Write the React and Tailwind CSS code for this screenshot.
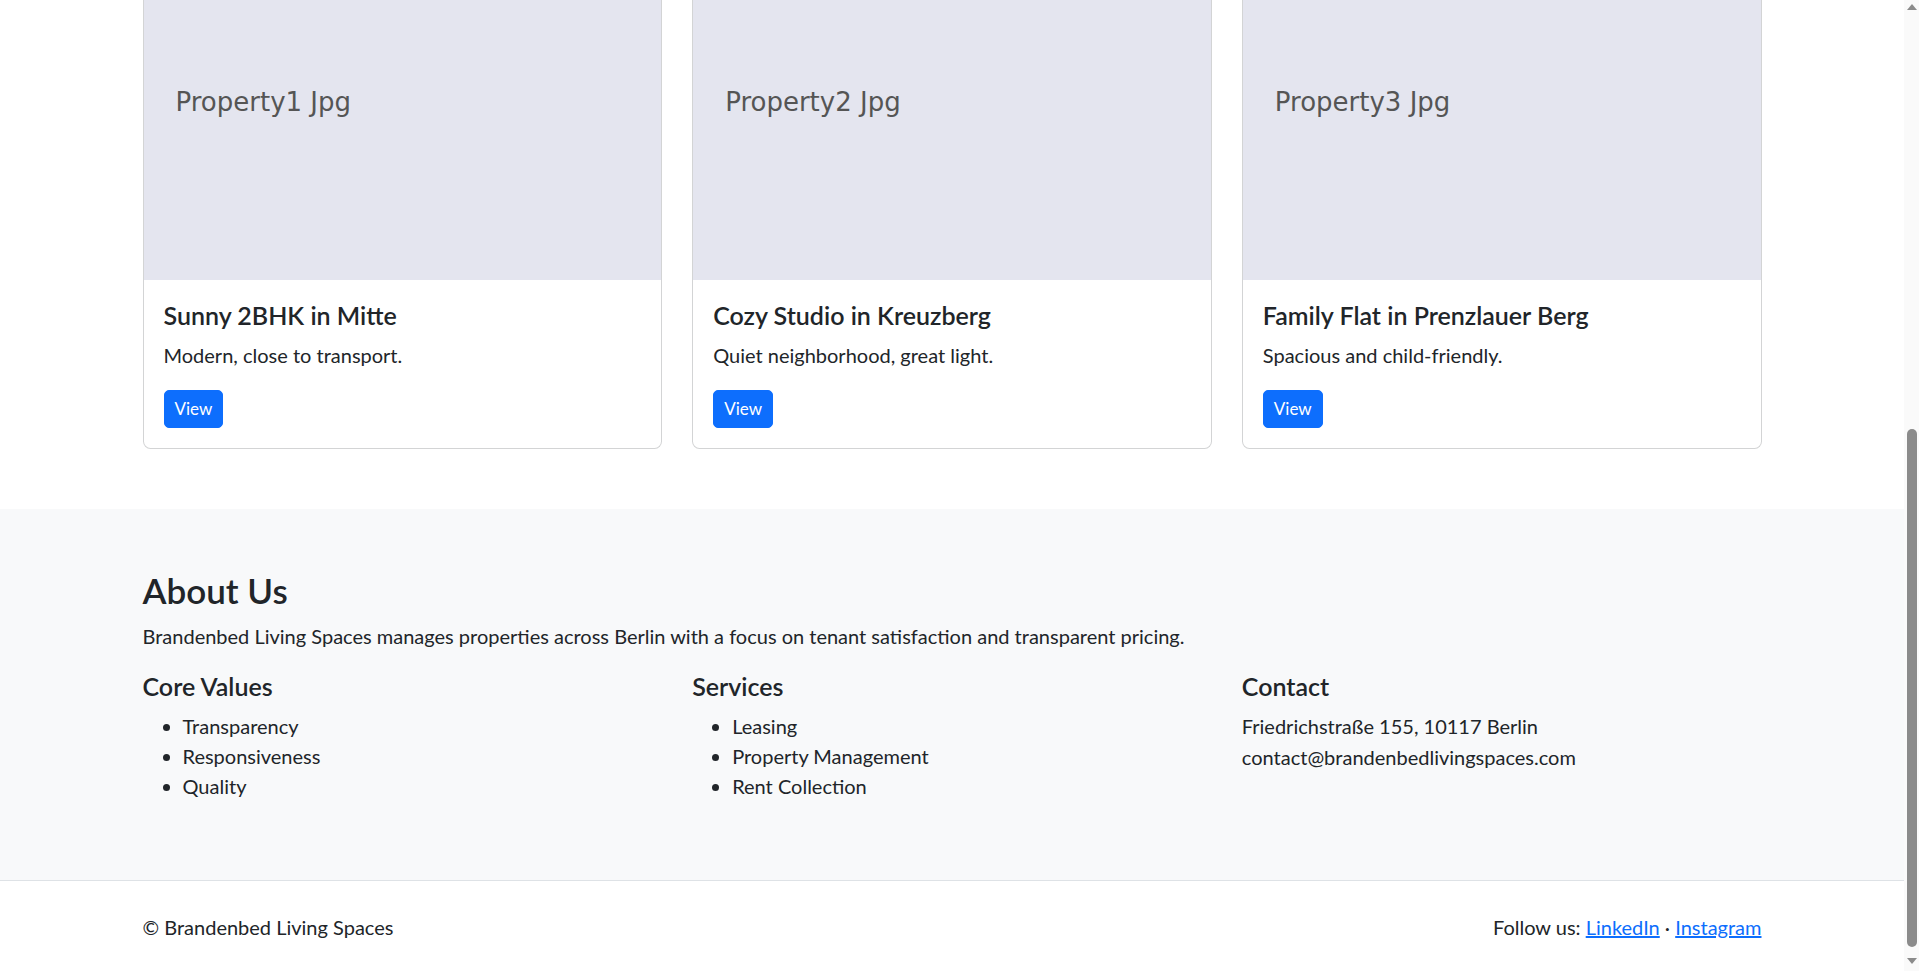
const properties = [
  { img: "Property1 Jpg", title: "Sunny 2BHK in Mitte", text: "Modern, close to transport." },
  { img: "Property2 Jpg", title: "Cozy Studio in Kreuzberg", text: "Quiet neighborhood, great light." },
  { img: "Property3 Jpg", title: "Family Flat in Prenzlauer Berg", text: "Spacious and child-friendly." },
];

const values = ["Transparency", "Responsiveness", "Quality"];
const services = ["Leasing", "Property Management", "Rent Collection"];

// the page is scrolled to its end: the card tops lie above the window
const PropertyCard = ({ item }) => (
  <div className="border-x border-b border-[#d3d4d5] rounded-b-[7.5px] overflow-hidden bg-white">
    <div className="h-[280px] bg-[#e4e5ef] pl-[32px] pt-[87px]">
      <span className="font-['DejaVu_Sans',sans-serif] text-[26px] leading-[30px] text-[#555]">{item.img}</span>
    </div>
    <div className="p-[20px]">
      <h5 className="text-[25px] leading-[30px] font-semibold mb-[10px]">{item.title}</h5>
      <p className="mb-[20px]">{item.text}</p>
      <button className="bg-[#0d6efd] text-white text-[17px] leading-[26px] px-[10px] py-[5px] border border-[#0d6efd] rounded-[5px]">
        View
      </button>
    </div>
  </div>
);

const Scrollbar = () => (
  <div className="w-[15px] shrink-0 bg-[#fafafa] flex flex-col items-center">
    <div className="mt-[4px] w-0 h-0 border-x-[5px] border-x-transparent border-b-[6px] border-b-[#8b8b8b]"></div>
    <div className="flex-1"></div>
    <div className="w-[10px] h-[518px] rounded-full bg-[#8b8b8b]"></div>
    <div className="mt-[11px] mb-[7px] w-0 h-0 border-x-[5px] border-x-transparent border-t-[6px] border-t-[#8b8b8b]"></div>
  </div>
);

export default function App() {
  return (
    <div className="h-[971px] flex bg-white text-[#212529] font-['Lato',sans-serif] text-[20px] leading-[30px] overflow-hidden">
      <div className="flex-1">
        {/* properties */}
        <section className="pb-[60px]">
          <div className="w-[1619px] mx-auto grid grid-cols-3 gap-[30px]">
            {properties.map((p, i) => (
              <PropertyCard key={i} item={p} />
            ))}
          </div>
        </section>

        {/* about */}
        <section className="bg-[#f8f9fa] pt-[60px] pb-[59px]">
          <div className="w-[1619px] mx-auto">
            <h3 className="text-[35px] leading-[42px] font-semibold mb-[10px]">About Us</h3>
            <p className="mb-[20px]">
              Brandenbed Living Spaces manages properties across Berlin with a focus on tenant satisfaction and transparent pricing.
            </p>
            <div className="grid grid-cols-3 gap-[30px]">
              <div>
                <h5 className="text-[25px] leading-[30px] font-semibold mb-[10px]">Core Values</h5>
                <ul className="list-disc pl-[40px] mb-[20px]">
                  {values.map((v) => <li key={v}>{v}</li>)}
                </ul>
              </div>
              <div>
                <h5 className="text-[25px] leading-[30px] font-semibold mb-[10px]">Services</h5>
                <ul className="list-disc pl-[40px] mb-[20px]">
                  {services.map((s) => <li key={s}>{s}</li>)}
                </ul>
              </div>
              <div>
                <h5 className="text-[25px] leading-[30px] font-semibold mb-[10px]">Contact</h5>
                <p>Friedrichstraße 155, 10117 Berlin</p>
                <p className="mt-[1px]">contact@brandenbedlivingspaces.com</p>
              </div>
            </div>
          </div>
        </section>

        {/* footer */}
        <footer className="border-t border-[#dee2e6] pt-[31px] pb-[29px]">
          <div className="w-[1619px] mx-auto flex justify-between">
            <span>© Brandenbed Living Spaces</span>
            <span>
              Follow us: <a href="#" className="text-[#0d6efd] underline">LinkedIn</a> · <a href="#" className="text-[#0d6efd] underline">Instagram</a>
            </span>
          </div>
        </footer>
      </div>
      <Scrollbar />
    </div>
  );
}
